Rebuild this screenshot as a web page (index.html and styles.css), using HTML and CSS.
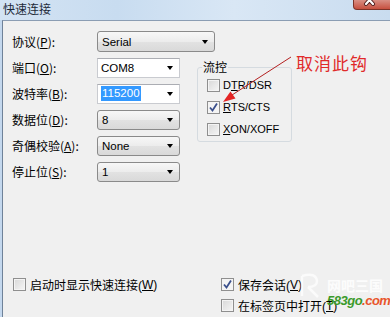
FILE: index.html
```html
<!DOCTYPE html>
<html lang="zh-CN">
<head>
<meta charset="UTF-8">
<title>快速连接</title>
<link rel="stylesheet" href="styles.css">
</head>
<body>

<div class="window">
  <div class="titlebar">
    <span class="title">快速连接</span>
    <span class="close">
      <svg width="43" height="10" viewBox="0 0 43 10">
        <path d="M12 -4 L19 4 M19 -4 L12 4" stroke="#4a1a1a" stroke-width="4" stroke-linecap="round"/>
        <path d="M12 -4 L19 4 M19 -4 L12 4" stroke="#fff" stroke-width="2.2" stroke-linecap="round"/>
      </svg>
    </span>
  </div>

  <div class="client">
    <div class="row">
      <label class="label">协议(<u>P</u>):</label>
      <div class="combo list wide"><span>Serial</span><i class="arrow"></i></div>
    </div>

    <div class="middle">
      <div class="fields">
        <div class="row">
          <label class="label">端口(<u>O</u>):</label>
          <div class="combo edit"><span>COM8</span><i class="arrow"></i></div>
        </div>
        <div class="row">
          <label class="label">波特率(<u>B</u>):</label>
          <div class="combo edit"><span class="selected">115200</span><i class="arrow"></i></div>
        </div>
        <div class="row">
          <label class="label">数据位(<u>D</u>):</label>
          <div class="combo list"><span>8</span><i class="arrow"></i></div>
        </div>
        <div class="row">
          <label class="label">奇偶校验(<u>A</u>):</label>
          <div class="combo list"><span>None</span><i class="arrow"></i></div>
        </div>
        <div class="row">
          <label class="label">停止位(<u>S</u>):</label>
          <div class="combo list"><span>1</span><i class="arrow"></i></div>
        </div>
      </div>

      <fieldset class="flow">
        <legend>流控</legend>
        <div class="check"><span class="box"></span>D<u>T</u>R/DSR</div>
        <div class="check"><span class="box checked"></span><u>R</u>TS/CTS</div>
        <div class="check"><span class="box"></span><u>X</u>ON/XOFF</div>
      </fieldset>
    </div>

    <div class="options">
      <div class="check cjk"><span class="box"></span>启动时显示快速连接(<u>W</u>)</div>
      <div class="side">
        <div class="check cjk"><span class="box checked"></span>保存会话(<u>V</u>)</div>
        <div class="check cjk"><span class="box"></span>在标签页中打开(<u>T</u>)</div>
      </div>
    </div>
  </div>

  <!-- annotation drawn on top of the dialog -->
  <svg class="annotation" width="390" height="317" viewBox="0 0 390 317">
    <line x1="291" y1="57" x2="232" y2="95" stroke="#b42020" stroke-width="1"/>
    <polygon points="223,102 235.5,98.5 230.5,91.5" fill="#e42424"/>
  </svg>
  <div class="note">取消此钩</div>

  <div class="watermark">
    <svg class="logo" width="24" height="28" viewBox="0 0 24 28">
      <path d="M4 4 Q18 0 19 9 Q19 15 10 15 M10 15 L20 25 M4 4 L4 24" fill="none" stroke="#fff" stroke-width="2.5" opacity="0.7"/>
    </svg>
    <div class="site">
      <div class="brand">网吧三国</div>
      <div class="domain"><span class="num">583go</span><span class="com">.com</span></div>
    </div>
  </div>
</div>

</body>
</html>
```

FILE: styles.css
```css
body {
  margin: 0;
  padding: 0;
  background: #f0f0f0;
  font-family: "Liberation Sans", "Noto Sans CJK SC", sans-serif;
  font-size: 12px;
  color: #000;
}

.window {
  position: relative;
  width: 390px;
  height: 317px;
  overflow: hidden;
  background: linear-gradient(to right, #c4d8ee 0, #c4d8ee 2px, #f0f0f0 2px);
}

.titlebar {
  height: 20px;
  display: flex;
  justify-content: space-between;
  background: linear-gradient(to right, #d3e3f3, #c8dcf0 30%, #d9e7f5 60%, #c9dcef);
}

.title {
  padding: 1px 0 0 3px;
  font-family: "Noto Sans CJK SC", sans-serif;
  font-size: 12px;
  line-height: 16px;
  color: #1e2a3a;
}

.close {
  width: 43px;
  height: 10px;
  margin-right: -6px;
  border: 1px solid #7d3328;
  border-top: none;
  border-radius: 0 0 4px 4px;
  background: linear-gradient(#d98f84, #c7503f);
  box-sizing: border-box;
}

.close svg {
  display: block;
}

.client {
  margin-left: 2px;
  height: 297px;
  box-sizing: border-box;
  border-left: 1px solid #6f8299;
  border-top: 1px solid #8b9db3;
  background: #f0f0f0;
  padding: 10px 0 0 9px;
}

.row {
  display: flex;
  align-items: center;
  height: 21px;
  margin-bottom: 5px;
}

.label {
  width: 85px;
  font-family: "Noto Sans CJK SC", sans-serif;
  font-size: 12px;
  line-height: 14px;
}

.label u, .check u {
  text-underline-offset: 1px;
}

.combo {
  position: relative;
  width: 83px;
  height: 20px;
  box-sizing: border-box;
  display: flex;
  align-items: center;
  padding-left: 4px;
  font-size: 11.5px;
}

.combo.wide {
  width: 118px;
  height: 21px;
}

.combo.list {
  border: 1px solid #8a8a8a;
  border-radius: 3px;
  background: linear-gradient(#f7f7f7, #ececec 50%, #e2e2e2 51%, #d9d9d9);
}

.combo.edit {
  border: 1px solid #c9cbd0;
  border-top-color: #abadb3;
  background: #fff;
  padding-left: 3px;
}

.selected {
  background: #3399ff;
  color: #fff;
  padding: 0 1px;
  line-height: 15px;
}

.arrow {
  position: absolute;
  right: 6px;
  top: 50%;
  margin-top: -2px;
  border-left: 3.5px solid transparent;
  border-right: 3.5px solid transparent;
  border-top: 4px solid #000;
}

.middle {
  display: flex;
  gap: 17px;
}

.fields {
  width: 168px;
}

.flow {
  width: 95px;
  height: 82px;
  box-sizing: border-box;
  margin: 3px 0 0;
  padding: 0 0 1px 9px;
  border: 1px solid #d5dbe0;
  border-radius: 3px;
}

.flow legend {
  padding: 0 1px;
  margin-left: -5px;
  font-family: "Noto Sans CJK SC", sans-serif;
  font-size: 12px;
  line-height: 14px;
}

.check {
  display: flex;
  align-items: center;
  height: 22px;
  font-size: 11px;
  white-space: nowrap;
}

.check.cjk {
  height: 21px;
  font-size: 12px;
}

.box {
  width: 13px;
  height: 13px;
  box-sizing: border-box;
  margin-right: 3px;
  border: 1px solid #8f8f8f;
  background: linear-gradient(135deg, #d8d8d8, #f6f6f6);
  box-shadow: inset 0 0 0 1px #f4f4f4;
  flex: none;
}

.check.cjk .box {
  margin-right: 4px;
}

.box.checked {
  background: #f4f4f4 url("data:image/svg+xml;utf8,<svg xmlns='http://www.w3.org/2000/svg' width='11' height='11'><path d='M2 5.5 L4.5 8.5 L9 1.5' fill='none' stroke='%233a4f8c' stroke-width='1.8'/></svg>") no-repeat center;
}

.options {
  display: flex;
  margin-top: 87px;
  padding-left: 1px;
}

.options > .check {
  width: 208px;
  align-self: flex-start;
}

.annotation {
  position: absolute;
  left: 0;
  top: 0;
  pointer-events: none;
}

.note {
  position: absolute;
  left: 296px;
  top: 53px;
  font-family: "Noto Sans CJK SC", sans-serif;
  font-size: 17px;
  line-height: 19px;
  color: #e02a2a;
  letter-spacing: 1px;
}

.watermark {
  position: absolute;
  left: 298px;
  top: 272px;
  display: flex;
  gap: 5px;
  pointer-events: none;
}

.site {
  padding-top: 4px;
}

.brand {
  font-family: "Noto Sans CJK SC", sans-serif;
  font-size: 14px;
  font-weight: bold;
  line-height: 18px;
  color: rgba(255, 255, 255, 0.85);
}

.domain {
  font-size: 13px;
  font-weight: bold;
  font-style: italic;
  line-height: 14px;
  letter-spacing: -0.5px;
}

.num {
  color: #3a9a2a;
}

.com {
  color: #e8552c;
}
```
